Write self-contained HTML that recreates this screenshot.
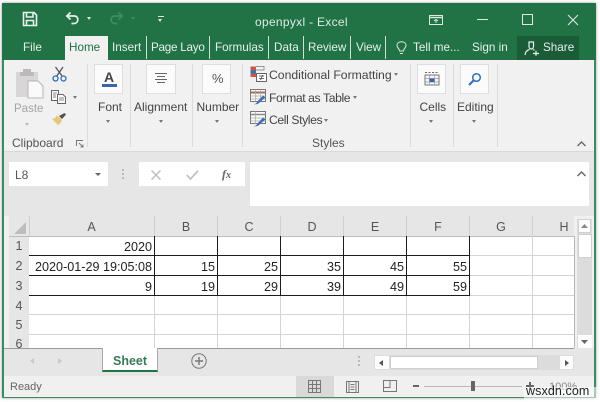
<!DOCTYPE html>
<html><head><meta charset="utf-8">
<style>
html,body{margin:0;padding:0;background:#fff}
#w{position:relative;width:600px;height:402px;overflow:hidden;background:#fff;font-family:"Liberation Sans",sans-serif;font-size:12px;color:#444;filter:blur(.35px)}
#w div,#w span.a{position:absolute}
.t{white-space:nowrap;line-height:14px}
.tab{color:#e6f0ea;font-size:11.7px;top:41px;white-space:nowrap;line-height:14px}
.sep{background:#cfe0d6;width:1px;top:36px;height:23px}
.rs{background:#dcdcdc;width:1px;top:64px;height:83px}
.box{background:#fbfbfb;border:1px solid #dedede;box-sizing:border-box;top:64px;height:30px}
.lb{font-size:12px;color:#444;white-space:nowrap;line-height:14px;top:100px}
.ar{width:0;height:0;border-left:2.5px solid transparent;border-right:2.5px solid transparent;border-top:3px solid #777}
.h{font-size:12.5px;color:#555;top:220px;line-height:14px;text-align:center}
.r{font-size:12.5px;color:#555;left:9px;width:20px;text-align:center;line-height:14px}
.c{font-size:12.6px;color:#222;line-height:14px;text-align:right;white-space:nowrap}
.gv{background:#d4d4d4;width:1px;top:236px;height:112px}
.gh{background:#d4d4d4;height:1px;left:29px;width:545px}
.bv{background:#1c1c1c;width:1px}
.bh{background:#1c1c1c;height:1px}
svg{position:absolute;overflow:visible}
</style></head><body>
<div id="w">
<div style="left:2px;top:3px;width:594px;height:395px;background:#f0f0f0;box-shadow:0 0 3px #999"></div>
<div style="left:2px;top:3px;width:594px;height:57px;background:#217346"></div>
<div style="left:2px;top:60px;width:2px;height:338px;background:#3f8a61"></div>
<div style="left:593.5px;top:60px;width:2px;height:338px;background:#3f8a61"></div>
<div style="left:2px;top:396.5px;width:594px;height:1.5px;background:#3f8a61"></div>

<!-- QAT -->
<svg style="left:22px;top:11px" width="16" height="16" viewBox="0 0 16 16" fill="none" stroke="#e8f2ec" stroke-width="1.6"><path d="M1.5 1.5H12L14.5 4V14.5H1.5Z"/><path d="M4.5 2V6H11V2"/><path d="M4.5 14V9.5H11.5V14"/></svg>
<svg style="left:65px;top:11px" width="16" height="15" viewBox="0 0 16 15" fill="none" stroke="#e8f2ec" stroke-width="1.7"><path d="M5.5 1.5L1.8 5L5.5 8.5"/><path d="M2 5H9.5C14 5 14 12.5 9 12.5H6.5"/></svg>
<div class="ar" style="left:87px;top:17px;border-top-color:#dbe8e0"></div>
<svg style="left:108px;top:11px" width="16" height="15" viewBox="0 0 16 15" fill="none" stroke="#3f8f63" stroke-width="1.7"><path d="M10.5 1.5L14.2 5L10.5 8.5"/><path d="M14 5H6.5C2 5 2 12.5 7 12.5H9.5"/></svg>
<div class="ar" style="left:131px;top:17px;border-top-color:#3f8f63"></div>
<div style="left:158px;top:16px;width:6px;height:1px;background:#dbe8e0"></div>
<div class="ar" style="left:158px;top:19px;border-top-color:#dbe8e0"></div>
<div class="t" style="left:255px;top:15px;color:#dfece5;font-size:12px;letter-spacing:.3px">openpyxl - Excel</div>

<!-- window buttons -->
<svg style="left:429px;top:15px" width="15" height="11" viewBox="0 0 15 11" fill="none" stroke="#dbe8e0"><path d="M.5 .5H13.5V9.5H.5Z"/><path d="M.5 2.5H13.5" stroke-width="1.5"/><path d="M7 8V4.5M5 6L7 4.5L9 6"/></svg>
<div style="left:477px;top:19px;width:11px;height:1px;background:#dbe8e0"></div>
<div style="left:522px;top:14px;width:9px;height:9px;border:1px solid #dbe8e0"></div>
<svg style="left:567px;top:14px" width="12" height="12" viewBox="0 0 12 12" stroke="#dbe8e0" stroke-width="1.1"><path d="M1 1L11 11M11 1L1 11"/></svg>

<!-- tabs -->
<div class="tab" style="left:23px">File</div>
<div style="left:65px;top:36px;width:43px;height:24px;background:#f1f1f1"></div>
<div class="tab" style="left:69px;color:#1f6f44">Home</div>
<div class="tab" style="left:112px">Insert</div>
<div class="sep" style="left:146px"></div>
<div class="tab" style="left:151px;letter-spacing:-.25px">Page Layo</div>
<div class="sep" style="left:209px"></div>
<div class="tab" style="left:215px">Formulas</div>
<div class="sep" style="left:268px"></div>
<div class="tab" style="left:274px">Data</div>
<div class="sep" style="left:303px"></div>
<div class="tab" style="left:308px">Review</div>
<div class="sep" style="left:350px"></div>
<div class="tab" style="left:356px">View</div>
<div class="sep" style="left:385px"></div>
<svg style="left:396px;top:41px" width="11" height="15" viewBox="0 0 11 15" fill="none" stroke="#dbe8e0"><path d="M3.5 10C3.5 7.5 1 7 1 4.5C1 2 3 .8 5.5 .8S10 2 10 4.5C10 7 7.5 7.5 7.5 10ZM4 12.5H7"/></svg>
<div class="tab" style="left:413px">Tell me...</div>
<div class="tab" style="left:472px">Sign in</div>
<div style="left:517px;top:36px;width:62px;height:24px;background:#1a5c38"></div>
<svg style="left:524px;top:40px" width="16" height="16" viewBox="0 0 16 16" fill="none" stroke="#e6f0ea" stroke-width="1.2"><path d="M5 2H9.5V6.5C9.5 8 8.5 9 7.2 9S5 8 5 6.5Z"/><path d="M1 15C1.5 11.5 3.5 10 5.5 9.5M9 9.5C9.5 9.7 10 10 10.5 10.3"/><path d="M9 13.5H15M12 10.8V15.8"/></svg>
<div class="tab" style="left:543px">Share</div>

<!-- Ribbon -->
<div style="left:4px;top:60px;width:589.5px;height:92px;background:#f1f1f1;border-bottom:1px solid #d9d9d9;box-sizing:border-box"></div>

<!-- Clipboard -->
<svg style="left:15px;top:67px" width="29" height="32" viewBox="0 0 29 32"><path d="M1 5H23V30H1Z" fill="#d8d6d6"/><path d="M8 5V2H16V5H19V9H5V5Z" fill="#bcbaba"/><path d="M13 14H23L28 19V31H13Z" fill="#fafafa" stroke="#b5b5b5"/></svg>
<div class="t" style="left:14px;top:102px;font-size:11.5px;color:#a5a5a5">Paste</div>
<div class="ar" style="left:25px;top:123px;border-top-color:#bbb"></div>
<svg style="left:52px;top:66px" width="15" height="16" viewBox="0 0 15 16" fill="none" stroke-width="1.3"><path d="M3.5 1L10.5 10.5M11 1L4.5 10.5" stroke="#555"/><circle cx="3.5" cy="12.5" r="2.5" stroke="#2f70b5"/><circle cx="11.5" cy="12.5" r="2.5" stroke="#2f70b5"/></svg>
<svg style="left:51px;top:90px" width="16" height="15" viewBox="0 0 16 15" fill="#fafafa" stroke="#666"><path d="M.5 .5H7.5V10.5H.5Z"/><path d="M6.5 4.5H12L14.5 7V13.5H6.5Z"/><path d="M2 3H6M2 5H5M2 7H5M8 8H13M8 10H13" stroke-width=".7"/></svg>
<div class="ar" style="left:73px;top:96px"></div>
<svg style="left:51px;top:112px" width="16" height="15" viewBox="0 0 16 15"><path d="M1 7L7 13C9 12 10.5 10 11 8L6 3.5C5 5.5 3 6.5 1 7Z" fill="#e8c678"/><path d="M8 4L11 7L15 2.5L13.5 1Z" fill="#55504a"/></svg>
<div class="t" style="left:12px;top:136px;font-size:12px;color:#555">Clipboard</div>
<svg style="left:76px;top:140px" width="8" height="8" viewBox="0 0 8 8" fill="none" stroke="#777"><path d="M.5 6V.5H7"/><path d="M3 3L7 7M7 4.5V7H4.5"/></svg>
<div class="rs" style="left:87px"></div>

<!-- Font -->
<div class="box" style="left:94px;width:29px"></div>
<div class="t" style="left:104px;top:70px;font-size:14px;color:#444;font-weight:bold">A</div>
<div style="left:102px;top:84px;width:15px;height:3px;background:#3d63ae"></div>
<div class="lb" style="left:98px">Font</div>
<div class="ar" style="left:106px;top:120px"></div>
<div class="rs" style="left:130px"></div>

<!-- Alignment -->
<div class="box" style="left:146px;width:30px"></div>
<svg style="left:155px;top:73px" width="12" height="11" stroke="#666"><path d="M0 .5H12M2 3.5H10M0 6.5H12M2 9.5H10"/></svg>
<div class="lb" style="left:134px">Alignment</div>
<div class="ar" style="left:159px;top:120px"></div>
<div class="rs" style="left:192px"></div>

<!-- Number -->
<div class="box" style="left:202px;width:29px"></div>
<div class="t" style="left:212px;top:72px;font-size:13px;color:#555">%</div>
<div class="lb" style="left:196.5px">Number</div>
<div class="ar" style="left:215px;top:120px"></div>
<div class="rs" style="left:242px"></div>

<!-- Styles -->
<svg style="left:250px;top:66px" width="17" height="16" viewBox="0 0 17 16"><path d="M.5 .5H14V4H.5Z" fill="#c55a4a"/><path d="M.5 4H6V7.5H.5Z" fill="#4b6fa8"/><path d="M.5 7.5H6V11H.5Z" fill="#c55a4a"/><path d="M6 .5H14V4H6" fill="#f3f3f3" stroke="#777" stroke-width=".7"/><path d="M6.5 7.5H16.5V15.5H6.5Z" fill="#fff" stroke="#666"/><path d="M9 10H14M9 12.5H14M12.8 9L10.5 14" stroke="#444" stroke-width=".8" fill="none"/></svg>
<div class="t" style="left:269px;top:68px;font-size:12.2px;color:#444">Conditional Formatting</div>
<div class="ar" style="left:394px;top:73px"></div>
<svg style="left:250px;top:89px" width="17" height="16" viewBox="0 0 17 16"><path d="M.5 .5H15.5V12.5H.5Z" fill="#fafafa" stroke="#777"/><path d="M.5 3.5H15.5" stroke="#a06a60" stroke-width="2"/><path d="M.5 7H15.5M.5 10H15.5M5.5 .5V12.5M10.5 .5V12.5" stroke="#aaa" stroke-width=".7"/><path d="M7 13L13 6.5L15.5 8.5L9 14C7.5 15.5 5 15.5 3.5 15C5.5 15 6.5 14.5 7 13Z" fill="#3f6fb0"/></svg>
<div class="t" style="left:269px;top:91px;font-size:12.2px;color:#444;letter-spacing:-.4px">Format as Table</div>
<div class="ar" style="left:353px;top:96px"></div>
<svg style="left:250px;top:111px" width="17" height="16" viewBox="0 0 17 16"><path d="M.5 .5H15.5V12.5H.5Z" fill="#fafafa" stroke="#777"/><path d="M.5 3.5H15.5" stroke="#888" stroke-width="1.5"/><path d="M.5 7H15.5M.5 10H15.5M5.5 .5V12.5" stroke="#aaa" stroke-width=".7"/><path d="M7 13L13 6.5L15.5 8.5L9 14C7.5 15.5 5 15.5 3.5 15C5.5 15 6.5 14.5 7 13Z" fill="#3f6fb0"/></svg>
<div class="t" style="left:269px;top:113px;font-size:12.2px;color:#444;letter-spacing:-.4px">Cell Styles</div>
<div class="ar" style="left:324px;top:119px"></div>
<div class="t" style="left:312px;top:136px;font-size:12px;color:#555">Styles</div>
<div class="rs" style="left:410px"></div>

<!-- Cells -->
<div class="box" style="left:417px;width:29px"></div>
<svg style="left:424px;top:71px" width="16" height="16" viewBox="0 0 16 16"><path d="M1 4H15V14H1Z" fill="#f5f5f5" stroke="#777"/><path d="M1 7.5H15M1 11H15M5.5 4V14M10.5 4V14" stroke="#999" stroke-width=".7"/><path d="M5.5 7.5H10.5V11H5.5Z" fill="#3d63ae"/><path d="M1 1.5H15" stroke="#666" stroke-dasharray="2 1.5"/></svg>
<div class="lb" style="left:419.5px">Cells</div>
<div class="ar" style="left:429px;top:120px"></div>
<div class="rs" style="left:453px"></div>

<!-- Editing -->
<div class="box" style="left:460px;width:29px"></div>
<svg style="left:468px;top:72px" width="14" height="14" viewBox="0 0 14 14" fill="none" stroke="#2f70b5" stroke-width="1.5"><circle cx="8.5" cy="5.5" r="3.8"/><path d="M5.5 8.5L1 13" stroke-width="2"/></svg>
<div class="lb" style="left:457px">Editing</div>
<div class="ar" style="left:472px;top:120px"></div>
<div class="rs" style="left:497px"></div>
<svg style="left:577px;top:141px" width="9" height="6" fill="none" stroke="#666" stroke-width="1.4"><path d="M.5 5L4.5 1L8.5 5"/></svg>

<!-- Formula bar -->
<div style="left:4px;top:152px;width:589.5px;height:64px;background:#e6e6e6"></div>
<div style="left:9px;top:162px;width:99px;height:24px;background:#fff"></div>
<div class="t" style="left:15px;top:168px;font-size:12px;color:#555">L8</div>
<div class="ar" style="left:95px;top:173px;border-left-width:3px;border-right-width:3px;border-top:3.5px solid #666"></div>
<div style="left:122px;top:169px;width:2px;height:2px;background:#bbb;box-shadow:0 4px #bbb,0 8px #bbb"></div>
<div style="left:139px;top:162px;width:106px;height:24px;background:#fff"></div>
<svg style="left:151px;top:170px" width="10" height="10" stroke="#bbb" stroke-width="1.4"><path d="M.5 .5L9.5 9.5M9.5 .5L.5 9.5"/></svg>
<svg style="left:186px;top:170px" width="13" height="10" fill="none" stroke="#bbb" stroke-width="1.6"><path d="M.8 5L4.5 9L12 .8"/></svg>
<div class="t" style="left:222px;top:167px;font-size:12px;color:#666;font-style:italic;font-weight:bold;font-family:'Liberation Serif',serif">f<span style="font-size:10px">x</span></div>
<div style="left:250px;top:162px;width:339px;height:44px;background:#fff"></div>
<svg style="left:577px;top:171px" width="9" height="6" fill="none" stroke="#666" stroke-width="1.4"><path d="M.5 5L4.5 1L8.5 5"/></svg>

<!-- Grid -->
<div style="left:9px;top:216px;width:565px;height:20px;background:#e6e6e6"></div>
<div style="left:9px;top:236px;width:20px;height:112px;background:#e6e6e6"></div>
<div style="left:29px;top:236px;width:545px;height:112px;background:#fff"></div>
<svg style="left:14px;top:222px" width="12" height="12"><path d="M12 0V12H0Z" fill="#bdbdbd"/></svg>
<div style="left:28.5px;top:216px;width:1px;height:20px;background:#cfcfcf"></div>
<div style="left:154px;top:216px;width:1px;height:20px;background:#cfcfcf"></div>
<div style="left:217px;top:216px;width:1px;height:20px;background:#cfcfcf"></div>
<div style="left:280px;top:216px;width:1px;height:20px;background:#cfcfcf"></div>
<div style="left:343px;top:216px;width:1px;height:20px;background:#cfcfcf"></div>
<div style="left:406px;top:216px;width:1px;height:20px;background:#cfcfcf"></div>
<div style="left:469px;top:216px;width:1px;height:20px;background:#cfcfcf"></div>
<div style="left:532px;top:216px;width:1px;height:20px;background:#cfcfcf"></div>
<div style="left:9px;top:235.5px;width:565px;height:1px;background:#bdbdbd"></div>

<div class="h" style="left:29px;width:125px">A</div>
<div class="h" style="left:155px;width:62px">B</div>
<div class="h" style="left:218px;width:62px">C</div>
<div class="h" style="left:281px;width:62px">D</div>
<div class="h" style="left:344px;width:62px">E</div>
<div class="h" style="left:407px;width:62px">F</div>
<div class="h" style="left:470px;width:62px">G</div>
<div class="h" style="left:556px;width:16px">H</div>

<div class="r" style="top:239px">1</div>
<div class="r" style="top:259px">2</div>
<div class="r" style="top:279px">3</div>
<div class="r" style="top:299px">4</div>
<div class="r" style="top:318px">5</div>
<div style="left:9px;top:337px;width:20px;height:11px;overflow:hidden"><div class="r" style="left:0;top:0">6</div></div>

<div class="gv" style="left:154px"></div><div class="gv" style="left:217px"></div><div class="gv" style="left:280px"></div><div class="gv" style="left:343px"></div><div class="gv" style="left:406px"></div><div class="gv" style="left:469px"></div><div class="gv" style="left:532px"></div>
<div class="gh" style="top:255px"></div><div class="gh" style="top:275px"></div><div class="gh" style="top:295px"></div><div class="gh" style="top:314px"></div><div class="gh" style="top:334px"></div>
<div style="left:29px;top:347.5px;width:545px;height:1px;background:#9a9a9a"></div>
<div style="left:573.5px;top:236px;width:1px;height:112px;background:#b5b5b5"></div>

<!-- black borders -->
<div class="bh" style="left:29px;top:255px;width:441px"></div>
<div class="bh" style="left:29px;top:275px;width:441px"></div>
<div class="bh" style="left:29px;top:295px;width:441px"></div>
<div class="bv" style="left:154px;top:236px;height:60px"></div>
<div class="bv" style="left:217px;top:236px;height:60px"></div>
<div class="bv" style="left:280px;top:236px;height:60px"></div>
<div class="bv" style="left:343px;top:236px;height:60px"></div>
<div class="bv" style="left:406px;top:236px;height:60px"></div>
<div class="bv" style="left:469px;top:236px;height:60px"></div>

<div class="c" style="left:29px;width:123px;top:240px">2020</div>
<div class="c" style="left:29px;width:123px;top:260px">2020-01-29 19:05:08</div>
<div class="c" style="left:29px;width:123px;top:280px">9</div>
<div class="c" style="left:155px;width:60px;top:260px">15</div>
<div class="c" style="left:155px;width:60px;top:280px">19</div>
<div class="c" style="left:218px;width:60px;top:260px">25</div>
<div class="c" style="left:218px;width:60px;top:280px">29</div>
<div class="c" style="left:281px;width:60px;top:260px">35</div>
<div class="c" style="left:281px;width:60px;top:280px">39</div>
<div class="c" style="left:344px;width:60px;top:260px">45</div>
<div class="c" style="left:344px;width:60px;top:280px">49</div>
<div class="c" style="left:407px;width:60px;top:260px">55</div>
<div class="c" style="left:407px;width:60px;top:280px">59</div>

<!-- vertical scrollbar -->
<div style="left:577px;top:219px;width:15px;height:130px;background:#dcdcdc"></div>
<div style="left:578px;top:219px;width:13px;height:14px;background:#fdfdfd;border:1px solid #d0d0d0;box-sizing:border-box"></div>
<svg style="left:581px;top:224px" width="7" height="4"><path d="M0 4L3.5 0L7 4Z" fill="#888"/></svg>
<div style="left:578px;top:234px;width:14px;height:24px;background:#fff;border:1px solid #cfcfcf;box-sizing:border-box"></div>
<div style="left:578px;top:335px;width:14px;height:14px;background:#fdfdfd"></div>
<svg style="left:581px;top:340px" width="7" height="4"><path d="M0 0L3.5 4L7 0Z" fill="#666"/></svg>

<!-- sheet tabs -->
<div style="left:4px;top:348px;width:589.5px;height:28px;background:#e6e6e6"></div>
<div style="left:4px;top:348px;width:98px;height:1px;background:#9a9a9a"></div>
<div style="left:158px;top:348px;width:416px;height:1px;background:#9a9a9a"></div>
<svg style="left:30px;top:358px" width="4" height="6"><path d="M4 0V6L0 3Z" fill="#c8c8c8"/></svg>
<svg style="left:58px;top:358px" width="4" height="6"><path d="M0 0V6L4 3Z" fill="#c8c8c8"/></svg>
<div style="left:102px;top:348px;width:56px;height:24px;background:#fff;border-left:1px solid #aaa;border-right:1px solid #aaa;border-bottom:2px solid #217346;box-sizing:border-box"></div>
<div class="t" style="left:113px;top:354px;font-size:12.5px;font-weight:bold;color:#3a7a57">Sheet</div>
<svg style="left:191px;top:353px" width="16" height="16" viewBox="0 0 16 16" fill="none" stroke="#777"><circle cx="8" cy="8" r="7.2"/><path d="M8 4V12M4 8H12" stroke-width="1.4"/></svg>
<div style="left:358px;top:356px;width:2px;height:2px;background:#bbb;box-shadow:0 4px #bbb,0 8px #bbb"></div>

<!-- h scrollbar -->
<div style="left:374px;top:355px;width:200px;height:15px;background:#dcdcdc"></div>
<div style="left:375px;top:356px;width:14px;height:13px;background:#fdfdfd"></div>
<svg style="left:379px;top:360px" width="4" height="6"><path d="M4 0V6L0 3Z" fill="#555"/></svg>
<div style="left:390px;top:356px;width:148px;height:13px;background:#fff;border:1px solid #cfcfcf;box-sizing:border-box"></div>
<div style="left:560px;top:356px;width:13px;height:13px;background:#fdfdfd"></div>
<svg style="left:565px;top:360px" width="4" height="6"><path d="M0 0V6L4 3Z" fill="#555"/></svg>

<!-- status -->
<div style="left:4px;top:376px;width:589.5px;height:20.5px;background:#f0f0f0"></div>
<div class="t" style="left:10px;top:380px;font-size:11px;color:#666">Ready</div>
<div style="left:296px;top:376px;width:38px;height:20.5px;background:#d9d9d9"></div>
<svg style="left:308px;top:380px" width="13" height="13" fill="none" stroke="#777"><path d="M.5 .5H12.5V12.5H.5ZM.5 4.5H12.5M.5 8.5H12.5M4.5 .5V12.5M8.5 .5V12.5"/></svg>
<svg style="left:346px;top:381px" width="13" height="12" fill="none" stroke="#777"><path d="M.5 .5H12.5V11.5H.5ZM3 .5V11.5M10 .5V11.5M4.5 3.5H8.5M4.5 6H8.5M4.5 8.5H8.5"/></svg>
<svg style="left:383px;top:380px" width="14" height="12" fill="none" stroke="#777"><path d="M.5 .5H13.5V11.5H.5ZM.5 7.5H7V.5"/></svg>
<div style="left:413px;top:385px;width:6px;height:2px;background:#666"></div>
<div style="left:424px;top:385.5px;width:98px;height:1px;background:#bbb"></div>
<div style="left:471px;top:381px;width:4px;height:10px;background:#666"></div>
<div style="left:526px;top:385px;width:8px;height:2px;background:#666"></div>
<div style="left:529px;top:382px;width:2px;height:8px;background:#666"></div>
<div class="t" style="left:549px;top:380px;font-size:11px;color:#888">100%</div>
<div style="left:524px;top:387px;width:76px;height:15px;background:#fff;opacity:.55"></div>
<div class="t" style="left:526px;top:384px;font-size:12.5px;color:#222;letter-spacing:.1px">wsxdn.com</div>
</div>
</body></html>
